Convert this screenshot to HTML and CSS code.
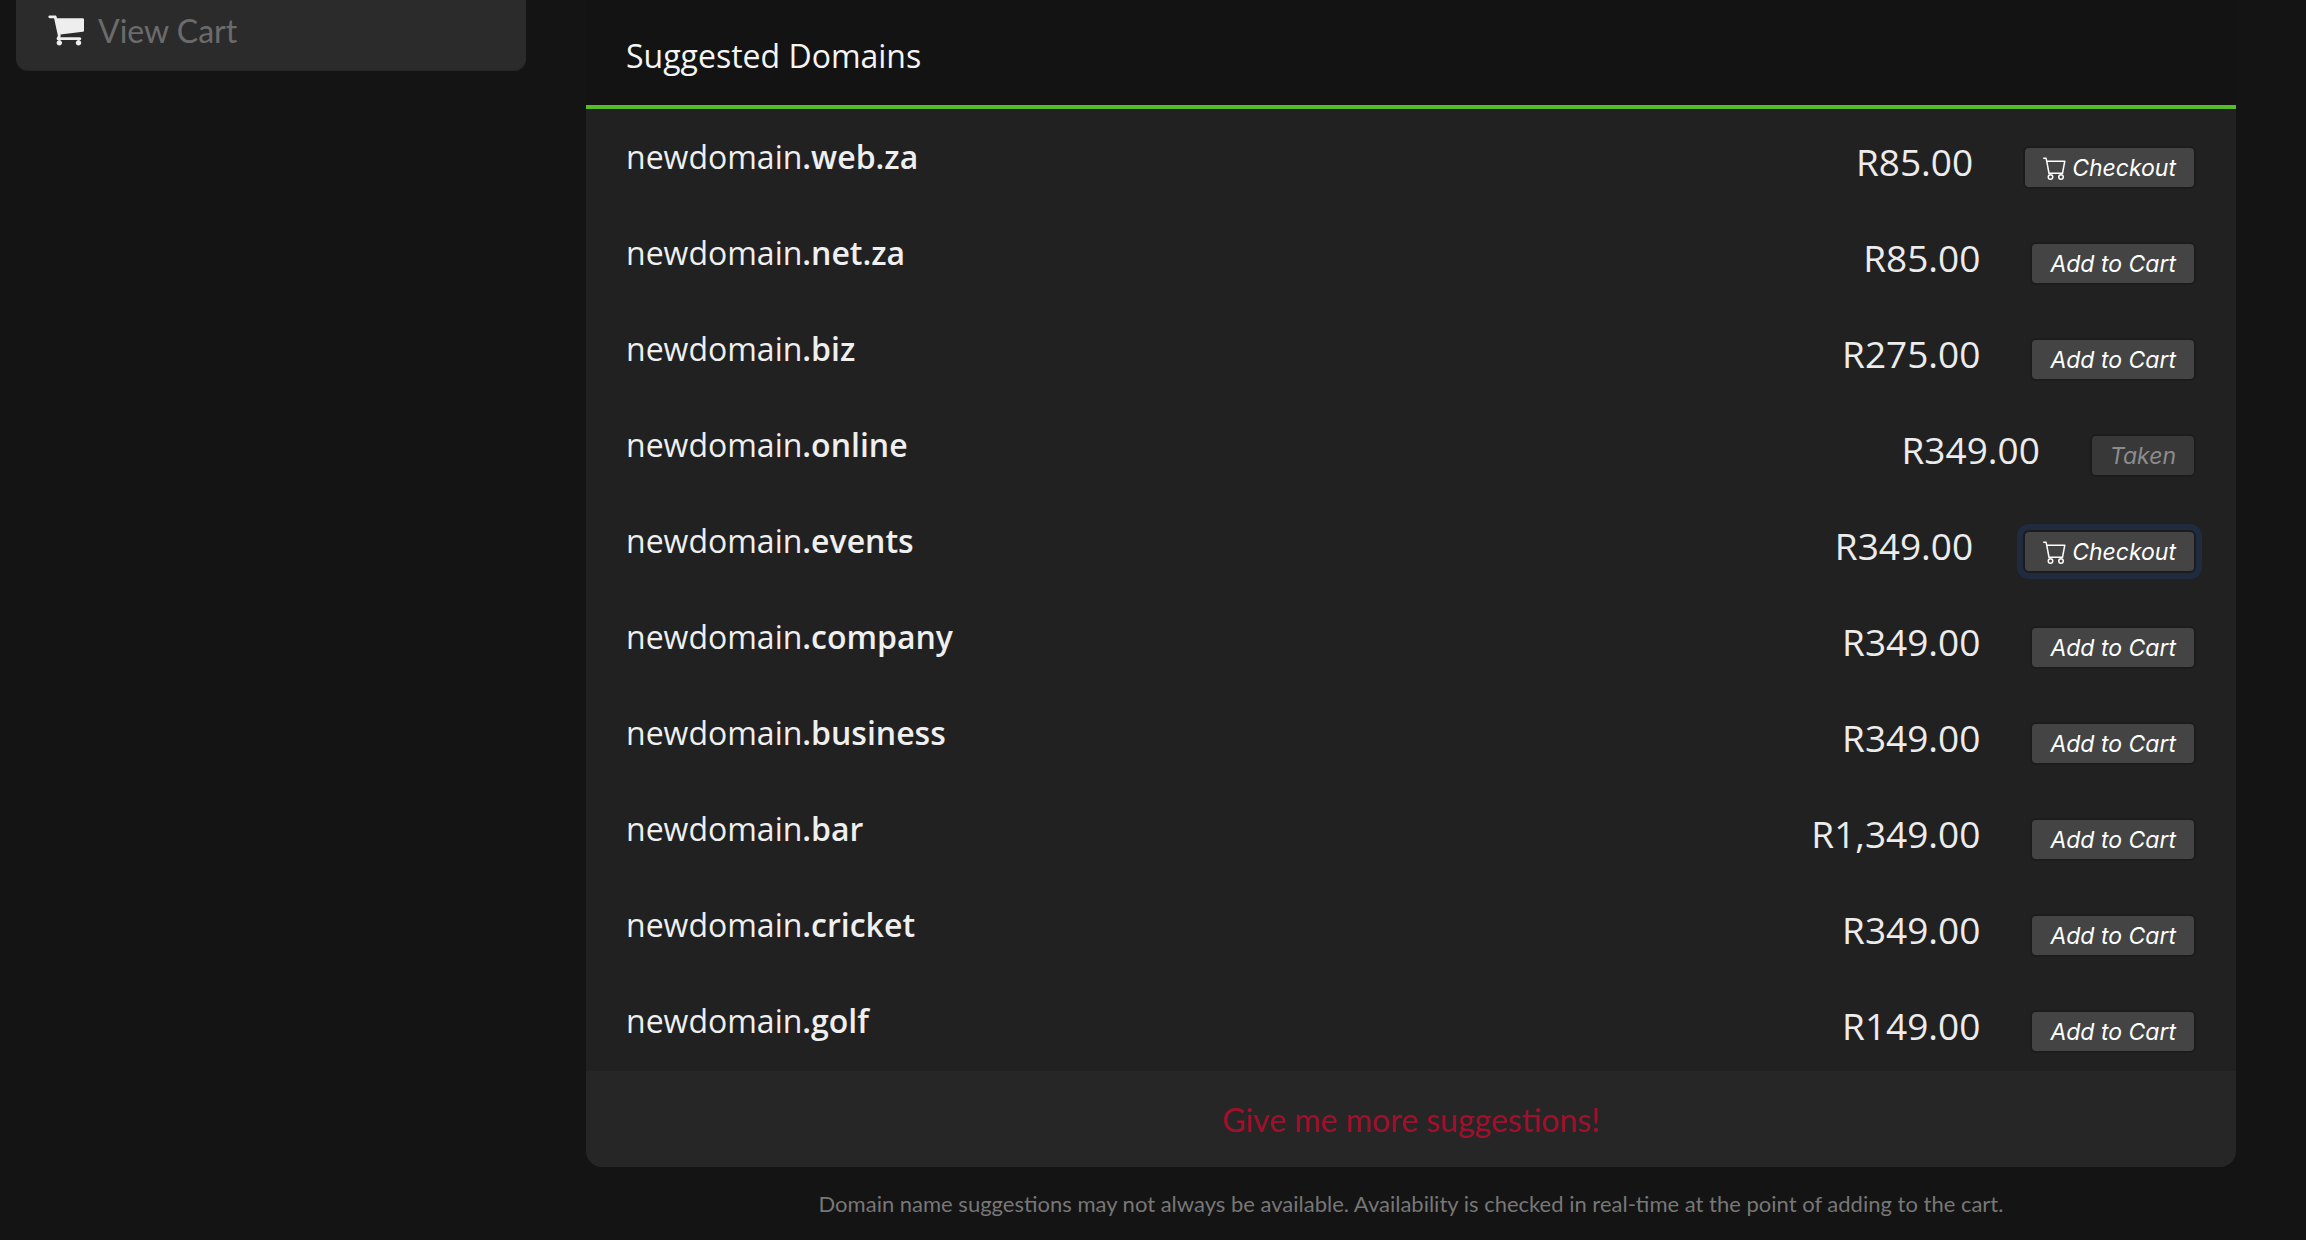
FILE: index.html
```html
<!DOCTYPE html>
<html lang="en">
<head>
<meta charset="utf-8">
<title>Suggested Domains</title>
<link rel="stylesheet" href="styles.css">
</head>
<body>
<div class="page">
  <aside class="sidebar">
    <a class="view-cart">
      <svg class="cart-solid" viewBox="0 256 1728 1408" fill="currentColor"><path d="M704 1536q0 52-38 90t-90 38-90-38-38-90 38-90 90-38 90 38 38 90zm896 0q0 52-38 90t-90 38-90-38-38-90 38-90 90-38 90 38 38 90zm128-1088v512q0 24-16.5 42.5t-40.5 21.5l-1044 122q13 60 13 70 0 16-24 64h920q26 0 45 19t19 45-19 45-45 19h-1024q-26 0-45-19t-19-45q0-11 8-31.5t16-36 21.5-40 15.5-29.5l-177-823h-204q-26 0-45-19t-19-45 19-45 45-19h256q16 0 28.5 6.5t19.5 15.5 13 24.5 8 26 5.5 29.5 4.5 26h1201q26 0 45 19t19 45z"/></svg>
      <span>View Cart</span>
    </a>
  </aside>
  <main class="main">
    <section class="panel">
      <h2 class="panel-title">Suggested Domains</h2>
      <ul class="rows">
        <li class="row"><span class="domain">newdomain<b>.web.za</b></span><span class="action"><span class="price">R85.00</span><button class="btn"><svg class="cart-line" viewBox="0 0 16 16" fill="currentColor"><path d="M0 1.5A.5.5 0 0 1 .5 1H2a.5.5 0 0 1 .485.379L2.89 3H14.5a.5.5 0 0 1 .491.592l-1.5 8A.5.5 0 0 1 13 12H4a.5.5 0 0 1-.491-.408L2.01 3.607 1.61 2H.5a.5.5 0 0 1-.5-.5zM3.102 4l1.313 7h8.17l1.313-7H3.102zM5 12a2 2 0 1 0 0 4 2 2 0 0 0 0-4zm7 0a2 2 0 1 0 0 4 2 2 0 0 0 0-4zm-7 1a1 1 0 1 1 0 2 1 1 0 0 1 0-2zm7 0a1 1 0 1 1 0 2 1 1 0 0 1 0-2z"/></svg>Checkout</button></span></li>
        <li class="row"><span class="domain">newdomain<b>.net.za</b></span><span class="action"><span class="price">R85.00</span><button class="btn">Add to Cart</button></span></li>
        <li class="row"><span class="domain">newdomain<b>.biz</b></span><span class="action"><span class="price">R275.00</span><button class="btn">Add to Cart</button></span></li>
        <li class="row"><span class="domain">newdomain<b>.online</b></span><span class="action"><span class="price">R349.00</span><button class="btn btn-taken">Taken</button></span></li>
        <li class="row"><span class="domain">newdomain<b>.events</b></span><span class="action"><span class="price">R349.00</span><button class="btn btn-focus"><svg class="cart-line" viewBox="0 0 16 16" fill="currentColor"><path d="M0 1.5A.5.5 0 0 1 .5 1H2a.5.5 0 0 1 .485.379L2.89 3H14.5a.5.5 0 0 1 .491.592l-1.5 8A.5.5 0 0 1 13 12H4a.5.5 0 0 1-.491-.408L2.01 3.607 1.61 2H.5a.5.5 0 0 1-.5-.5zM3.102 4l1.313 7h8.17l1.313-7H3.102zM5 12a2 2 0 1 0 0 4 2 2 0 0 0 0-4zm7 0a2 2 0 1 0 0 4 2 2 0 0 0 0-4zm-7 1a1 1 0 1 1 0 2 1 1 0 0 1 0-2zm7 0a1 1 0 1 1 0 2 1 1 0 0 1 0-2z"/></svg>Checkout</button></span></li>
        <li class="row"><span class="domain">newdomain<b>.company</b></span><span class="action"><span class="price">R349.00</span><button class="btn">Add to Cart</button></span></li>
        <li class="row"><span class="domain">newdomain<b>.business</b></span><span class="action"><span class="price">R349.00</span><button class="btn">Add to Cart</button></span></li>
        <li class="row"><span class="domain">newdomain<b>.bar</b></span><span class="action"><span class="price">R1,349.00</span><button class="btn">Add to Cart</button></span></li>
        <li class="row"><span class="domain">newdomain<b>.cricket</b></span><span class="action"><span class="price">R349.00</span><button class="btn">Add to Cart</button></span></li>
        <li class="row"><span class="domain">newdomain<b>.golf</b></span><span class="action"><span class="price">R149.00</span><button class="btn">Add to Cart</button></span></li>
      </ul>
      <div class="panel-footer"><a class="more">Give me more suggestions!</a></div>
    </section>
    <p class="note">Domain name suggestions may not always be available. Availability is checked in real-time at the point of adding to the cart.</p>
  </main>
</div>
</body>
</html>
```
FILE: styles.css
```css
* { box-sizing: border-box; }
html, body { margin: 0; height: 100%; }
body { background: #141414; overflow: hidden; font-family: "Open Sans", sans-serif; color: #f0f0f0; }
.page { display: flex; align-items: flex-start; padding: 0 70px 0 16px; gap: 60px; }
.sidebar { flex: 0 0 510px; height: 71px; background: #2b2b2b; border-radius: 0 0 12px 12px; border-bottom: 1px solid #262626; }
.view-cart { display: flex; align-items: center; gap: 14px; height: 60px; padding-left: 31px; font: 32px "Lato", sans-serif; color: #6b6b6b; }
.cart-solid { width: 37px; height: 31px; color: #eeeeee; flex: none; }
.main { flex: 1; min-width: 0; }
.panel { background: #212121; border-radius: 0 0 16px 16px; overflow: hidden; }
.panel-title { margin: 0; height: 109px; padding: 34px 40px 0; background: #131313; border-bottom: 4px solid #59bb28; font-size: 32px; line-height: 44px; font-weight: 400; color: #f5f5f5; }
.rows { list-style: none; margin: 0; padding: 2px 0 0; }
.row { display: flex; justify-content: space-between; align-items: flex-start; height: 96px; padding: 0 40px; }
.domain { padding-top: 22px; font-size: 32px; line-height: 48px; color: #efefef; }
.domain b { font-weight: 600; }
.action { display: flex; align-items: flex-start; gap: 50px; }
.price { padding-top: 27px; font-size: 37px; line-height: 48px; color: #ececec; }
.btn { display: flex; align-items: center; gap: 5px; height: 43px; margin-top: 35px; padding: 0 18px 0 18px; background: #444444; border: 2px solid #1c1c1c; border-radius: 6px; font: italic 23px "Inter", sans-serif; color: #ffffff; }
.btn-taken { background: #383838; color: #8c8c8c; }
.btn-focus { box-shadow: 0 0 0 6px #212b3f; border-color: #1c1c1c; }
.cart-line { width: 24px; height: 24px; flex: none; }
.panel-footer { height: 96px; background: #262626; display: flex; align-items: center; justify-content: center; }
.more { font: 32px "Lato", sans-serif; color: #a0102c; }
.note { margin: 22px 0 0; text-align: center; font: 22px/30px "Lato", sans-serif; color: #777777; }
```
